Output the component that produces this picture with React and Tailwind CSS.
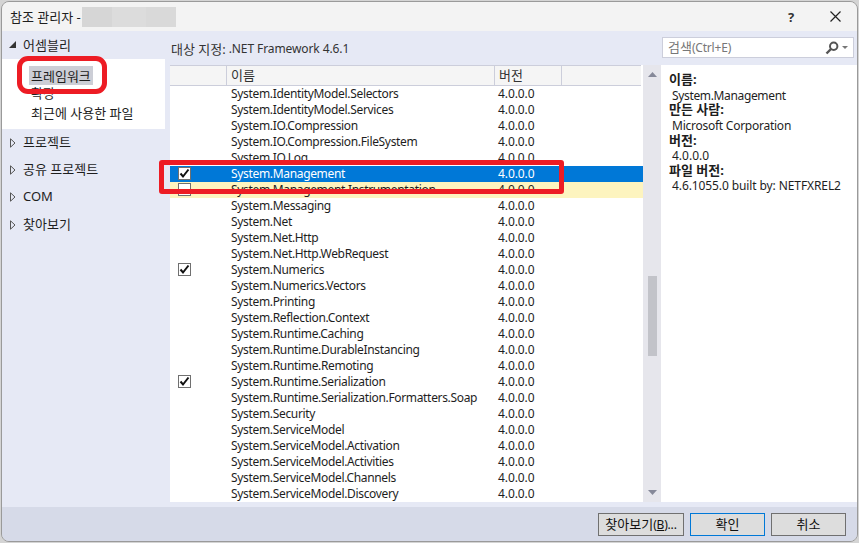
import React from "react";

const FONT = "font-['Noto_Sans','Noto_Sans_CJK_KR',sans-serif]";

const rows = [
  ["System.IdentityModel.Selectors"],
  ["System.IdentityModel.Services"],
  ["System.IO.Compression"],
  ["System.IO.Compression.FileSystem"],
  ["System.IO.Log"],
  ["System.Management", "selected"],
  ["System.Management.Instrumentation", "hover"],
  ["System.Messaging"],
  ["System.Net"],
  ["System.Net.Http"],
  ["System.Net.Http.WebRequest"],
  ["System.Numerics", "checked"],
  ["System.Numerics.Vectors"],
  ["System.Printing"],
  ["System.Reflection.Context"],
  ["System.Runtime.Caching"],
  ["System.Runtime.DurableInstancing"],
  ["System.Runtime.Remoting"],
  ["System.Runtime.Serialization", "checked"],
  ["System.Runtime.Serialization.Formatters.Soap"],
  ["System.Security"],
  ["System.ServiceModel"],
  ["System.ServiceModel.Activation"],
  ["System.ServiceModel.Activities"],
  ["System.ServiceModel.Channels"],
  ["System.ServiceModel.Discovery"],
];

function Check({ checked }) {
  return (
    <span className="w-[13px] h-[13px] border border-[#707070] bg-white flex items-center justify-center shrink-0">
      {checked && (
        <svg width="11" height="11" viewBox="0 0 11 11">
          <path d="M1.5 5.5 L4 8.5 L9.5 1.5" fill="none" stroke="#111" strokeWidth="2" />
        </svg>
      )}
    </span>
  );
}

function Row({ name, state }) {
  const bg =
    state === "selected"
      ? "bg-[#0078d7] text-white"
      : state === "hover"
        ? "bg-[#fdf4bf] text-[#1e1e1e]"
        : "text-[#1e1e1e]";
  return (
    <div className={`h-4 flex items-center ${bg}`}>
      <div className="w-[61px] h-4 pl-2 pt-px flex items-start shrink-0">
        {(state === "selected" || state === "checked") && <Check checked />}
        {state === "hover" && <Check />}
      </div>
      <div className="w-[267px] shrink-0 whitespace-nowrap tracking-[-0.33px]">{name}</div>
      <div className="tracking-[-0.1px]">4.0.0.0</div>
    </div>
  );
}

function TreeHead({ label, open, h }) {
  return (
    <div className={`${h} flex items-center pl-[7px] text-[#1e1e1e]`}>
      <svg width="7" height="10" viewBox="0 0 7 10" className="shrink-0 mr-[7px]">
        {open ? (
          <path d="M0 8 H7 V1 Z" fill="#333" />
        ) : (
          <path d="M1.5 0.8 L6 5 L1.5 9.2 Z" fill="none" stroke="#555" />
        )}
      </svg>
      <span className={`text-[13px] ${open ? "" : "-mt-[2px]"}`}>{label}</span>
    </div>
  );
}

function Btn({ children, w, primary }) {
  return (
    <div
      className={`${w} h-[23px] flex items-center justify-center bg-[#dddddd] border text-[#111] pb-px ${primary ? "border-[#0078d7]" : "border-[#707070]"}`}
    >
      {children}
    </div>
  );
}

export default function App() {
  return (
    <div className={`${FONT} relative w-[859px] h-[543px] overflow-hidden bg-[#d4d4d4] p-px pr-0 text-[12px] leading-4`}>
      <div className="w-[857px] h-[541px] rounded-lg border border-[#9a9a9a] overflow-hidden flex flex-col">
        {/* title bar */}
        <div className="h-[29px] shrink-0 bg-[#f3f3f3] flex items-center pl-2 text-[#1e1e1e]">
          <span className="whitespace-nowrap text-[13px]">참조 관리자 -</span>
          <div className="ml-[1px] w-[94px] h-5 flex">
            <div className="w-[30px] bg-[#d6d6d6]" />
            <div className="w-[34px] bg-[#dcdcdc]" />
            <div className="w-[30px] bg-[#d9d9d9]" />
          </div>
          <div className="ml-auto flex items-center">
            <span className="w-5 text-center text-[13px] font-bold text-[#333]">?</span>
            <svg width="11" height="11" viewBox="0 0 11 11" className="ml-[29px] mr-[16px]">
              <path d="M0.5 0.5 L10.5 10.5 M10.5 0.5 L0.5 10.5" stroke="#222" strokeWidth="1.2" fill="none" />
            </svg>
          </div>
        </div>

        {/* main */}
        <div className="h-[476px] shrink-0 bg-[#e6e9f5] flex">
          {/* sidebar */}
          <div className="w-[163px] shrink-0 flex flex-col">
            <TreeHead label="어셈블리" open h="h-[28px]" />
            <div className="h-[70px] bg-white flex flex-col pt-[7px] pl-[27px] text-[#1e1e1e] text-[13px]">
              <div className="h-[19px] w-fit px-[2px] bg-[#ccced6] flex items-center">프레임워크</div>
              <div className="h-[18px] pl-[2px] pb-[2px] flex items-center">확장</div>
              <div className="h-[21px] pl-[2px] pb-[2px] flex items-center">최근에 사용한 파일</div>
            </div>
            <TreeHead label="프로젝트" h="h-[27px]" />
            <TreeHead label="공유 프로젝트" h="h-[27px]" />
            <TreeHead label="COM" h="h-[28px]" />
            <TreeHead label="찾아보기" h="h-[27px]" />
          </div>

          {/* center */}
          <div className="ml-[5px] w-[491px] shrink-0 flex flex-col">
            <div className="h-[34px] flex items-center text-[#333] pt-[1px] pl-px whitespace-nowrap tracking-[-0.1px]">
              <span className="text-[13px] tracking-normal">대상 지정:</span>&nbsp;.NET Framework 4.6.1
            </div>
            <div className="h-[437px] flex">
              <div className="w-[473px] h-full bg-white overflow-hidden">
                <div className="w-[471px] h-[21px] bg-[#f5f5f5] border-y border-[#ccceDB] flex text-[#333] text-[13px]">
                  <div className="w-[57px] border-r border-[#ccceDB]" />
                  <div className="w-[268px] border-r border-[#ccceDB] pl-[4px] pb-[2px] flex items-center">이름</div>
                  <div className="w-[67px] border-r border-[#ccceDB] pl-[4px] pb-[2px] flex items-center">버전</div>
                </div>
                {rows.map(([n, s]) => (
                  <Row key={n} name={n} state={s} />
                ))}
              </div>
              <div className="w-[18px] h-full bg-[#e6e6ec] flex flex-col items-center">
                <svg width="9" height="5" viewBox="0 0 9 5" className="mt-[7px]">
                  <path d="M0 5 L4.5 0 L9 5 Z" fill="#868999" />
                </svg>
                <div className="w-[9px] h-20 bg-[#c2c3c9] mt-[199px]" />
                <svg width="9" height="5" viewBox="0 0 9 5" className="mt-[134px]">
                  <path d="M0 0 L9 0 L4.5 5 Z" fill="#868999" />
                </svg>
              </div>
            </div>
          </div>

          {/* details */}
          <div className="flex-1 flex flex-col">
            <div className="h-[34px] pl-px pr-[3px] pt-[6px]">
              <div className="h-[21px] bg-white border border-[#ccceDB] flex items-center pl-[5px] pr-[5px] text-[#777] tracking-[-0.2px]">
                <span><span className="text-[13px] tracking-normal">검색</span>(Ctrl+E)</span>
                <svg width="14" height="14" viewBox="0 0 14 14" className="ml-auto">
                  <circle cx="8.7" cy="5.3" r="3.7" fill="none" stroke="#555" strokeWidth="2" />
                  <path d="M6 8 L1.5 12.5" stroke="#555" strokeWidth="2.4" fill="none" />
                </svg>
                <svg width="6" height="3" viewBox="0 0 6 3" className="ml-[3px]">
                  <path d="M0 0 H6 L3 3 Z" fill="#777" />
                </svg>
              </div>
            </div>
            <div className="h-[437px] bg-white pl-2 pt-[7px] text-[#1e1e1e] leading-[15px]">
              <div className="font-bold text-[13px]">이름:</div>
              <div className="pl-[3px] pt-px -mb-px tracking-[-0.35px]">System.Management</div>
              <div className="font-bold text-[13px]">만든 사람:</div>
              <div className="pl-[3px] pt-px -mb-px tracking-[-0.25px]">Microsoft Corporation</div>
              <div className="font-bold text-[13px] pt-px -mb-px">버전:</div>
              <div className="pl-[3px] pt-px -mb-px">4.0.0.0</div>
              <div className="font-bold text-[13px] pt-px -mb-px">파일 버전:</div>
              <div className="pl-[3px] pt-px -mb-px tracking-[-0.1px] whitespace-nowrap">4.6.1055.0 built by: NETFXREL2</div>
            </div>
          </div>
        </div>

        {/* footer */}
        <div className="flex-1 bg-[#d6dae8] flex justify-end gap-[6px] pt-[6px] pr-[11px]">
          <Btn w="w-[86px]">
            <span className="tracking-[-0.2px]"><span className="text-[13px] tracking-normal">찾아보기</span>(<span className="underline">B</span>)...</span>
          </Btn>
          <Btn w="w-[75px]" primary><span className="text-[13px]">확인</span></Btn>
          <Btn w="w-[75px]"><span className="text-[13px]">취소</span></Btn>
        </div>
      </div>

      {/* red annotation marks */}
      <div className="absolute left-[17px] top-[56px] w-[90px] h-[38px] rounded-[11px] border-[5px] border-[#ed1c24]" />
      <div className="absolute left-[159px] top-[160px] w-[405px] h-[34px] rounded-[3px] border-[5px] border-[#ed1c24]" />
    </div>
  );
}
